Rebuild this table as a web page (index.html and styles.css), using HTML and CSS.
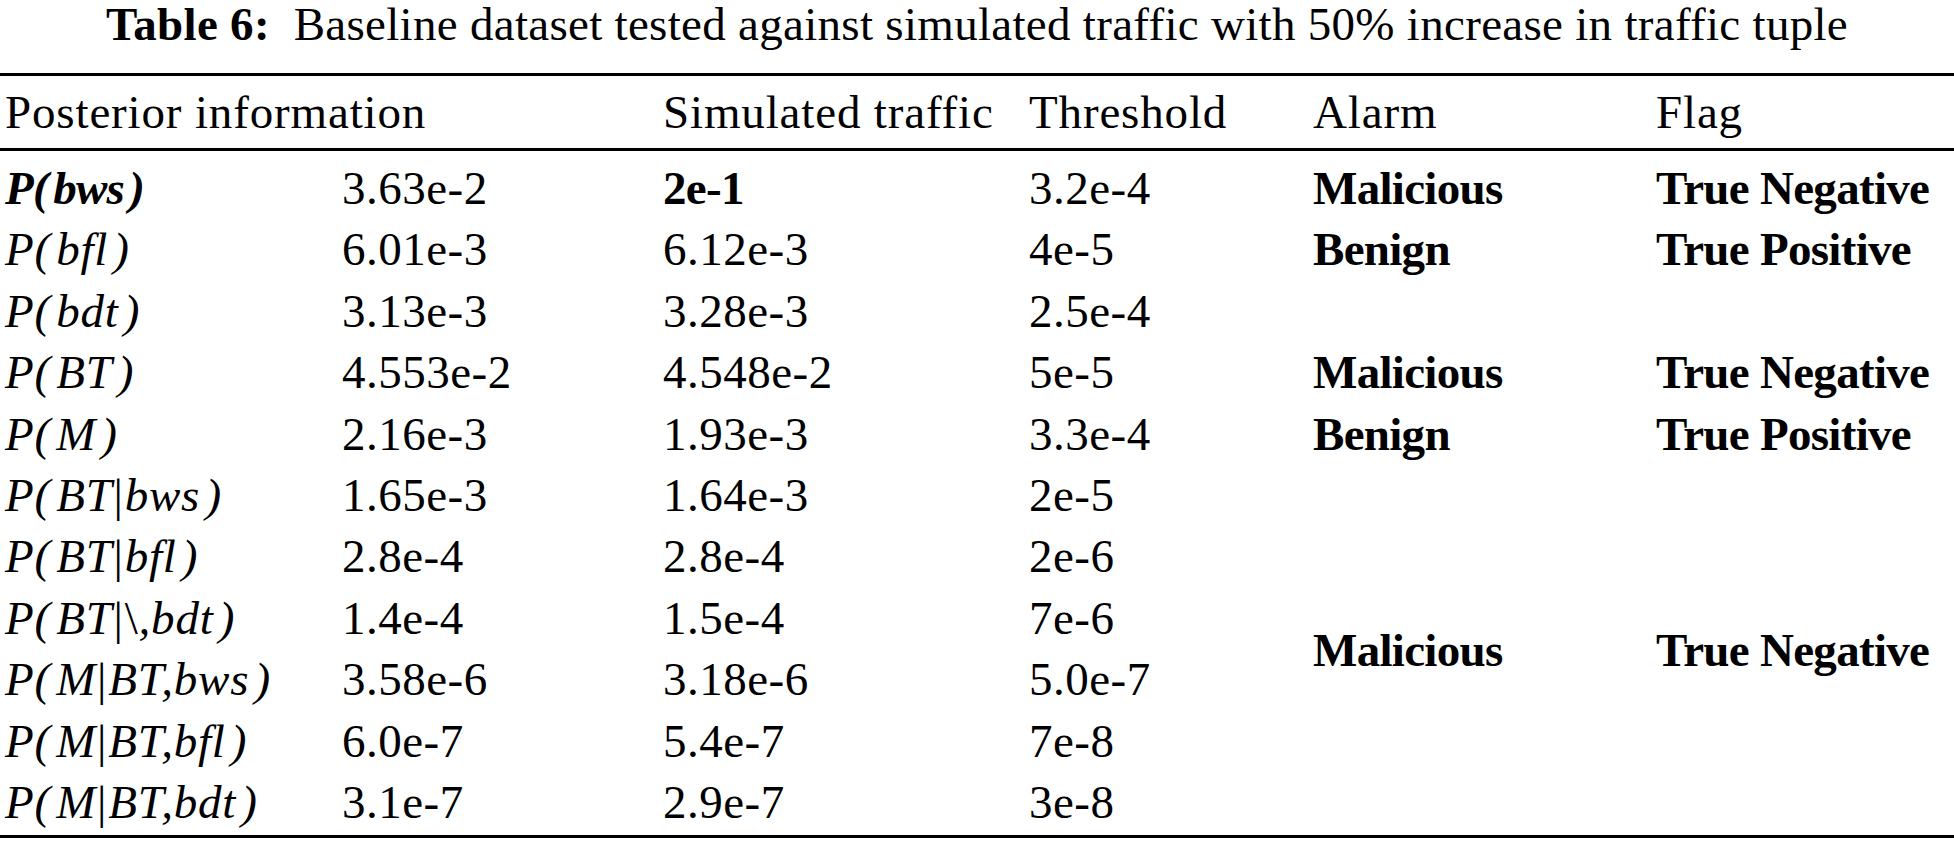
FILE: index.html
```html
<!DOCTYPE html>
<html lang="en">
<head>
<meta charset="utf-8">
<title>Table 6</title>
<link rel="stylesheet" href="styles.css">
</head>
<body>
<div class="page">
  <div class="caption"><span class="cap-label">Table 6:</span> Baseline dataset tested against simulated traffic with 50% increase in traffic tuple</div>
  <table class="data">
    <colgroup>
      <col class="c1"><col class="c2"><col class="c3"><col class="c4"><col class="c5"><col class="c6">
    </colgroup>
    <thead>
      <tr>
        <th colspan="2" class="first">Posterior information</th>
        <th>Simulated traffic</th>
        <th>Threshold</th>
        <th>Alarm</th>
        <th>Flag</th>
      </tr>
    </thead>
    <tbody>
      <tr class="r1">
        <td class="first m b">P<span class="po">(</span>bws<span class="pc">)</span></td>
        <td>3.63e-2</td>
        <td class="b">2e-1</td>
        <td>3.2e-4</td>
        <td class="b">Malicious</td>
        <td class="b">True Negative</td>
      </tr>
      <tr>
        <td class="first m">P<span class="po">(</span>bfl<span class="pc">)</span></td>
        <td>6.01e-3</td>
        <td>6.12e-3</td>
        <td>4e-5</td>
        <td class="b">Benign</td>
        <td class="b">True Positive</td>
      </tr>
      <tr>
        <td class="first m">P<span class="po">(</span>bdt<span class="pc">)</span></td>
        <td>3.13e-3</td>
        <td>3.28e-3</td>
        <td>2.5e-4</td>
        <td></td>
        <td></td>
      </tr>
      <tr>
        <td class="first m">P<span class="po">(</span>BT<span class="pc">)</span></td>
        <td>4.553e-2</td>
        <td>4.548e-2</td>
        <td>5e-5</td>
        <td class="b">Malicious</td>
        <td class="b">True Negative</td>
      </tr>
      <tr>
        <td class="first m">P<span class="po">(</span>M<span class="pc">)</span></td>
        <td>2.16e-3</td>
        <td>1.93e-3</td>
        <td>3.3e-4</td>
        <td class="b">Benign</td>
        <td class="b">True Positive</td>
      </tr>
      <tr>
        <td class="first m">P<span class="po">(</span>BT<span class="bar">|</span>bws<span class="pc">)</span></td>
        <td>1.65e-3</td>
        <td>1.64e-3</td>
        <td>2e-5</td>
        <td rowspan="6" class="b mid">Malicious</td>
        <td rowspan="6" class="b mid">True Negative</td>
      </tr>
      <tr>
        <td class="first m">P<span class="po">(</span>BT<span class="bar">|</span>bfl<span class="pc">)</span></td>
        <td>2.8e-4</td>
        <td>2.8e-4</td>
        <td>2e-6</td>
      </tr>
      <tr>
        <td class="first m">P<span class="po">(</span>BT<span class="bar">|</span><span class="up">\</span>,bdt<span class="pc">)</span></td>
        <td>1.4e-4</td>
        <td>1.5e-4</td>
        <td>7e-6</td>
      </tr>
      <tr>
        <td class="first m">P<span class="po">(</span>M<span class="bar">|</span>BT,bws<span class="pc">)</span></td>
        <td>3.58e-6</td>
        <td>3.18e-6</td>
        <td>5.0e-7</td>
      </tr>
      <tr>
        <td class="first m">P<span class="po">(</span>M<span class="bar">|</span>BT,bfl<span class="pc">)</span></td>
        <td>6.0e-7</td>
        <td>5.4e-7</td>
        <td>7e-8</td>
      </tr>
      <tr class="rlast">
        <td class="first m">P<span class="po">(</span>M<span class="bar">|</span>BT,bdt<span class="pc">)</span></td>
        <td>3.1e-7</td>
        <td>2.9e-7</td>
        <td>3e-8</td>
      </tr>
    </tbody>
  </table>
</div>
</body>
</html>
```
FILE: styles.css
```css
html, body {
  margin: 0;
  padding: 0;
  background: #ffffff;
}

body {
  font-family: "Liberation Serif", "Times New Roman", serif;
  color: #000000;
  font-size: 47px;
}

.page {
  width: 1954px;
}

.caption {
  text-align: center;
  line-height: 48px;
  height: 48px;
  margin-bottom: 25px;
  white-space: nowrap;
  letter-spacing: 0.3px;
}

.cap-label {
  font-weight: bold;
  margin-right: 0.25em;
}

.data {
  width: 1954px;
  table-layout: fixed;
  border-collapse: collapse;
  border-top: 3px solid #000;
  border-bottom: 3px solid #000;
  letter-spacing: 0.5px;
}

.c1 { width: 342px; }
.c2 { width: 321px; }
.c3 { width: 366px; }
.c4 { width: 284px; }
.c5 { width: 343px; }
.c6 { width: 298px; }

.data th,
.data td {
  padding: 0;
  text-align: left;
  white-space: nowrap;
  vertical-align: middle;
}

.data th {
  font-weight: normal;
  height: 72px;
  line-height: 72px;
  border-bottom: 3px solid #000;
  letter-spacing: 0.85px;
}

.data td {
  height: 61.4px;
  line-height: 61.4px;
}

.data tr.r1 td {
  padding-top: 7px;
}

.data tr.rlast td {
  padding-bottom: 2px;
}

.data .first {
  padding-left: 5px;
}

.m {
  font-style: italic;
  letter-spacing: 0.8px;
}

.b {
  font-weight: bold;
  letter-spacing: -0.7px;
}

.po {
  margin-right: 0.11em;
}

.pc {
  margin-left: 0.11em;
}

.bar {
  font-style: normal;
  margin: 0 0.02em;
}

.up {
  font-style: normal;
}

.mid {
  vertical-align: middle;
}
```
